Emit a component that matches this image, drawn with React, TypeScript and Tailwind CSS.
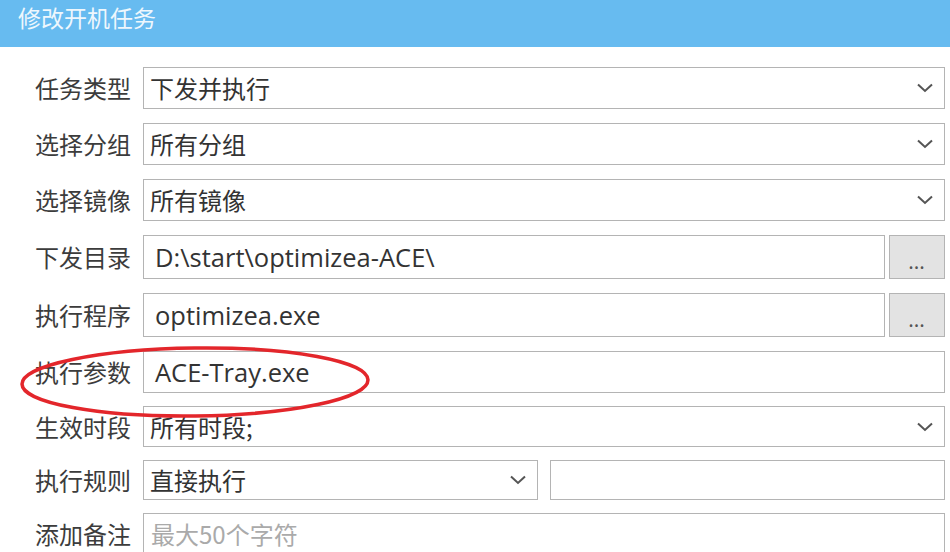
import { ReactNode } from "react";

const font = { fontFamily: '"Noto Sans CJK SC", "Noto Sans", sans-serif' };

function Chevron() {
  return (
    <svg width="18" height="10" viewBox="0 0 18 10" className="shrink-0">
      <path d="M2 1.5 L9 8 L16 1.5" fill="none" stroke="#555" strokeWidth="2" />
    </svg>
  );
}

function Row({ label, h = "h-[42px]", children }: { label: string; h?: string; children: ReactNode }) {
  return (
    <div className={`flex items-center ${h}`}>
      <div className="w-[143px] shrink-0 pr-[12px] text-right text-[24px] text-[#3c3c3c] leading-none">
        {label}
      </div>
      <div className="flex flex-1 h-full gap-1">{children}</div>
    </div>
  );
}

function Select({ value, className = "flex-1" }: { value: string; className?: string }) {
  return (
    <div className={`${className} flex items-center justify-between border border-[#b4b4b4] bg-white pl-[6px] pr-[10px] text-[24px] text-[#333]`}>
      <span>{value}</span>
      <Chevron />
    </div>
  );
}

function Input({ value, placeholder }: { value?: string; placeholder?: string }) {
  return (
    <div className="flex-1 flex items-center border border-[#b4b4b4] bg-white pl-[11px] text-[25.5px] text-[#333]">
      {value ? (
        <span style={{ fontFamily: '"Open Sans", "Noto Sans CJK SC", sans-serif' }}>{value}</span>
      ) : (
        <span className="text-[#aaa] text-[24px] -ml-[4px]">{placeholder}</span>
      )}
    </div>
  );
}

function Browse() {
  return (
    <div className="w-[56px] shrink-0 flex items-end justify-center pb-[8px] border border-[#b4b4b4] bg-[#e3e3e3] text-[#555] text-[14px] font-bold leading-none tracking-[1px]">
      ...
    </div>
  );
}

export default function App() {
  return (
    <div className="relative w-[950px] h-[552px] bg-white overflow-hidden" style={font}>
      <div className="h-[47px] bg-[#67bbf0] pl-[18px] pt-[1px] text-[#eef7fd] text-[23px] leading-[32px]">
        修改开机任务
      </div>

      <div className="flex flex-col pt-[20px] pr-[5px]">
        <div className="flex flex-col gap-[14px]">
          <Row label="任务类型">
            <Select value="下发并执行" />
          </Row>
          <Row label="选择分组">
            <Select value="所有分组" />
          </Row>
          <Row label="选择镜像">
            <Select value="所有镜像" />
          </Row>
          <Row label="下发目录" h="h-[44px]">
            <Input value="D:\start\optimizea-ACE\" />
            <Browse />
          </Row>
          <Row label="执行程序" h="h-[44px]">
            <Input value="optimizea.exe" />
            <Browse />
          </Row>
          <Row label="执行参数">
            <Input value="ACE-Tray.exe" />
          </Row>
        </div>
        <div className="flex flex-col gap-[13px] mt-[13px]">
          <Row label="生效时段" h="h-[41px]">
            <Select value="所有时段;" />
          </Row>
          <Row label="执行规则" h="h-[40px]">
            <div className="flex flex-1 gap-[12px]">
              <Select value="直接执行" className="w-[395px]" />
              <Input />
            </div>
          </Row>
          <Row label="添加备注">
            <Input placeholder="最大50个字符" />
          </Row>
        </div>
      </div>

      <svg className="absolute left-[14px] top-[339px]" width="362" height="86" viewBox="0 0 362 86">
        <ellipse cx="181" cy="43" rx="173" ry="34" fill="none" stroke="#e3262b" strokeWidth="3.5" transform="rotate(-0.7 181 43)" />
      </svg>
    </div>
  );
}
